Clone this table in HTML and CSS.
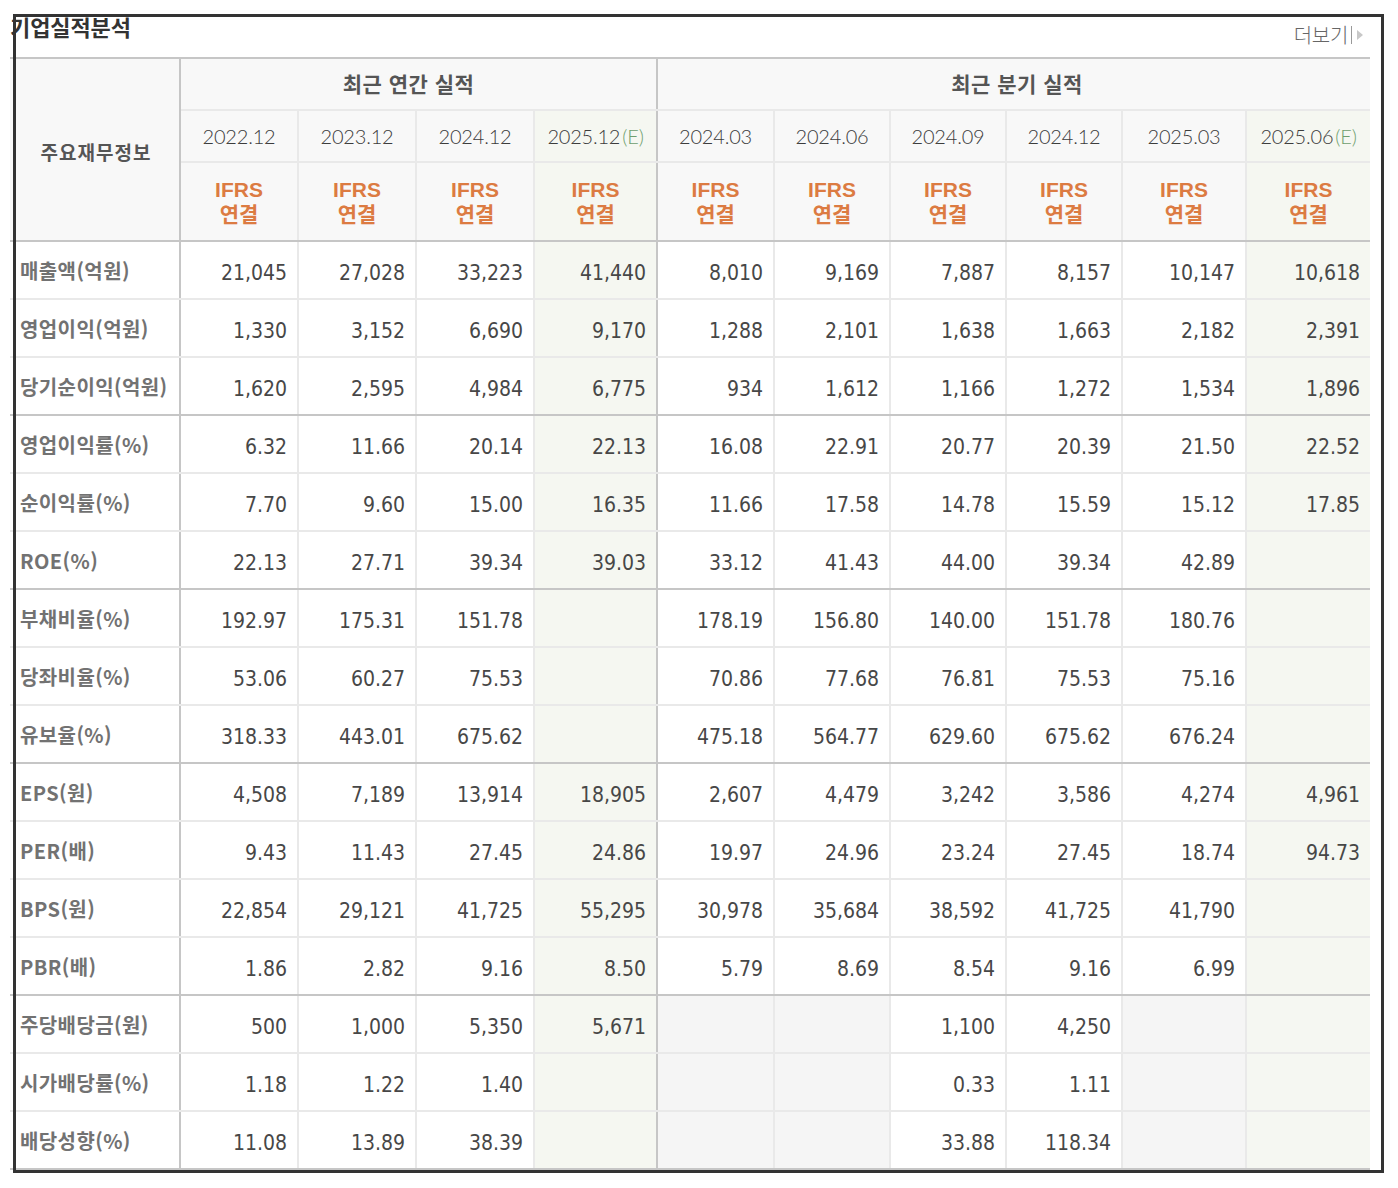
FILE: index.html
```html
<!DOCTYPE html>
<html lang="ko">
<head>
<meta charset="utf-8">
<title>기업실적분석</title>
<link rel="stylesheet" href="styles.css">
</head>
<body>
<div class="page">
  <div class="head">
    <h3 class="title">기업실적분석</h3>
    <a class="more" href="#">더보기<span class="bar"></span><span class="tri"></span></a>
  </div>
  <table class="perf">
    <colgroup>
      <col class="c-label"><col class="c-a"><col class="c-a"><col class="c-a"><col class="c-ae">
      <col class="c-q1"><col class="c-q"><col class="c-q"><col class="c-q"><col class="c-qe"><col class="c-qe">
    </colgroup>
    <thead>
      <tr class="h1">
        <th rowspan="3" class="lbl-h gl">주요재무정보</th>
        <th colspan="4" class="grp grp-a gl">최근 연간 실적</th>
        <th colspan="6" class="grp grp-q last">최근 분기 실적</th>
      </tr>
      <tr class="h2">
        <th class="dt">2022.12</th><th class="dt">2023.12</th><th class="dt">2024.12</th><th class="dt est gl">2025.12<em>(E)</em></th>
        <th class="dt">2024.03</th><th class="dt">2024.06</th><th class="dt">2024.09</th><th class="dt">2024.12</th><th class="dt">2025.03</th><th class="dt est last">2025.06<em>(E)</em></th>
      </tr>
      <tr class="h3">
        <th class="ifrs">IFRS<br>연결</th><th class="ifrs">IFRS<br>연결</th><th class="ifrs">IFRS<br>연결</th><th class="ifrs est gl">IFRS<br>연결</th>
        <th class="ifrs">IFRS<br>연결</th><th class="ifrs">IFRS<br>연결</th><th class="ifrs">IFRS<br>연결</th><th class="ifrs">IFRS<br>연결</th><th class="ifrs">IFRS<br>연결</th><th class="ifrs est last">IFRS<br>연결</th>
      </tr>
    </thead>
    <tbody>
      <tr><th class="lbl gl">매출액(억원)</th><td>21,045</td><td>27,028</td><td>33,223</td><td class="est gl">41,440</td><td>8,010</td><td>9,169</td><td>7,887</td><td>8,157</td><td>10,147</td><td class="est last">10,618</td></tr>
      <tr><th class="lbl gl">영업이익(억원)</th><td>1,330</td><td>3,152</td><td>6,690</td><td class="est gl">9,170</td><td>1,288</td><td>2,101</td><td>1,638</td><td>1,663</td><td>2,182</td><td class="est last">2,391</td></tr>
      <tr class="ge"><th class="lbl gl">당기순이익(억원)</th><td>1,620</td><td>2,595</td><td>4,984</td><td class="est gl">6,775</td><td>934</td><td>1,612</td><td>1,166</td><td>1,272</td><td>1,534</td><td class="est last">1,896</td></tr>
      <tr><th class="lbl gl">영업이익률(%)</th><td>6.32</td><td>11.66</td><td>20.14</td><td class="est gl">22.13</td><td>16.08</td><td>22.91</td><td>20.77</td><td>20.39</td><td>21.50</td><td class="est last">22.52</td></tr>
      <tr><th class="lbl gl">순이익률(%)</th><td>7.70</td><td>9.60</td><td>15.00</td><td class="est gl">16.35</td><td>11.66</td><td>17.58</td><td>14.78</td><td>15.59</td><td>15.12</td><td class="est last">17.85</td></tr>
      <tr class="ge"><th class="lbl gl">ROE(%)</th><td>22.13</td><td>27.71</td><td>39.34</td><td class="est gl">39.03</td><td>33.12</td><td>41.43</td><td>44.00</td><td>39.34</td><td>42.89</td><td class="est last"></td></tr>
      <tr><th class="lbl gl">부채비율(%)</th><td>192.97</td><td>175.31</td><td>151.78</td><td class="est gl"></td><td>178.19</td><td>156.80</td><td>140.00</td><td>151.78</td><td>180.76</td><td class="est last"></td></tr>
      <tr><th class="lbl gl">당좌비율(%)</th><td>53.06</td><td>60.27</td><td>75.53</td><td class="est gl"></td><td>70.86</td><td>77.68</td><td>76.81</td><td>75.53</td><td>75.16</td><td class="est last"></td></tr>
      <tr class="ge"><th class="lbl gl">유보율(%)</th><td>318.33</td><td>443.01</td><td>675.62</td><td class="est gl"></td><td>475.18</td><td>564.77</td><td>629.60</td><td>675.62</td><td>676.24</td><td class="est last"></td></tr>
      <tr><th class="lbl gl">EPS(원)</th><td>4,508</td><td>7,189</td><td>13,914</td><td class="est gl">18,905</td><td>2,607</td><td>4,479</td><td>3,242</td><td>3,586</td><td>4,274</td><td class="est last">4,961</td></tr>
      <tr><th class="lbl gl">PER(배)</th><td>9.43</td><td>11.43</td><td>27.45</td><td class="est gl">24.86</td><td>19.97</td><td>24.96</td><td>23.24</td><td>27.45</td><td>18.74</td><td class="est last">94.73</td></tr>
      <tr><th class="lbl gl">BPS(원)</th><td>22,854</td><td>29,121</td><td>41,725</td><td class="est gl">55,295</td><td>30,978</td><td>35,684</td><td>38,592</td><td>41,725</td><td>41,790</td><td class="est last"></td></tr>
      <tr class="ge"><th class="lbl gl">PBR(배)</th><td>1.86</td><td>2.82</td><td>9.16</td><td class="est gl">8.50</td><td>5.79</td><td>8.69</td><td>8.54</td><td>9.16</td><td>6.99</td><td class="est last"></td></tr>
      <tr><th class="lbl gl">주당배당금(원)</th><td>500</td><td>1,000</td><td>5,350</td><td class="est gl">5,671</td><td class="na"></td><td class="na"></td><td>1,100</td><td>4,250</td><td class="na"></td><td class="na-est last"></td></tr>
      <tr><th class="lbl gl">시가배당률(%)</th><td>1.18</td><td>1.22</td><td>1.40</td><td class="est gl"></td><td class="na"></td><td class="na"></td><td>0.33</td><td>1.11</td><td class="na"></td><td class="na-est last"></td></tr>
      <tr class="ge end"><th class="lbl gl">배당성향(%)</th><td>11.08</td><td>13.89</td><td>38.39</td><td class="est gl"></td><td class="na"></td><td class="na"></td><td>33.88</td><td>118.34</td><td class="na"></td><td class="na-est last"></td></tr>
    </tbody>
  </table>
</div>
<div class="frame"></div>
</body>
</html>
```

FILE: styles.css
```css
html, body {
  margin: 0;
  padding: 0;
  background: #fff;
}
body {
  font-family: "Noto Sans CJK KR", "Noto Sans", sans-serif;
  color: #444;
}
.page {
  width: 1360px;
  margin-left: 10px;
}
.head {
  display: flex;
  justify-content: space-between;
  align-items: flex-start;
  height: 57px;
}
.title {
  margin: 0;
  padding-top: 12px;
  font-size: 22px;
  line-height: 28px;
  font-weight: 700;
  color: #333;
  letter-spacing: -0.1px;
}
.more {
  display: flex;
  align-items: center;
  margin-top: 23px;
  margin-right: 7px;
  font-family: "Lato", "Noto Sans CJK KR", sans-serif;
  font-size: 20px;
  line-height: 24px;
  font-weight: 300;
  color: #666;
  text-decoration: none;
  letter-spacing: -0.3px;
}
.more .bar {
  width: 1px;
  height: 18px;
  background: #999;
  margin-left: 3px;
}
.more .tri {
  width: 0;
  height: 0;
  border-left: 6px solid #c8c8c8;
  border-top: 5px solid transparent;
  border-bottom: 5px solid transparent;
  margin-left: 5px;
}
.perf {
  width: 1360px;
  border-collapse: collapse;
  table-layout: fixed;
  border-top: 2px solid #c6c6c6;
}
.c-label { width: 170px; }
.c-a { width: 118px; }
.c-ae { width: 123px; }
.c-q1 { width: 117px; }
.c-q { width: 116px; }
.c-qe { width: 124px; }

.perf th, .perf td {
  padding: 0;
  border-right: 2px solid #e9e9e9;
  border-bottom: 2px solid #e9e9e9;
}
.perf .gl {
  border-right-color: #c6c6c6;
}
.perf .last {
  border-right: none;
}
.perf thead tr.h3 th,
.perf thead th.lbl-h {
  border-bottom-color: #c6c6c6;
}
.perf tr.ge th, .perf tr.ge td {
  border-bottom-color: #c6c6c6;
}
.perf thead th {
  background: #f8f8f8;
}
.h1 { height: 52px; }
.h2 { height: 52px; }
.h3 { height: 79px; }
.perf th.lbl-h {
  font-size: 19px;
  font-weight: 700;
  color: #555;
  letter-spacing: 1px;
  padding-top: 3px;
  padding-left: 3px;
}
.perf th.grp {
  font-size: 21px;
  font-weight: 700;
  color: #555;
  letter-spacing: 0.5px;
  padding-bottom: 2px;
}
.perf th.grp-a {
  padding-right: 20px;
}
.perf th.grp-q {
  padding-left: 6px;
}
.perf th.dt {
  font-family: "Lato", "Noto Sans CJK KR", sans-serif;
  font-size: 20px;
  font-weight: 300;
  color: #3c3c3c;
  letter-spacing: -0.2px;
}
.dt em {
  font-style: normal;
  color: #6e9e6e;
  margin-left: 2px;
}
.perf th.ifrs {
  font-family: "Liberation Sans", "Noto Sans CJK KR", sans-serif;
  font-size: 21px;
  line-height: 25px;
  font-weight: 700;
  color: #dc7b42;
  padding-top: 0;
}
.perf thead th.est,
.perf td.est {
  background: #f5f7f1;
}
.perf td.na {
  background: #f5f5f5;
}
.perf td.na-est {
  background: #f5f7f2;
}
.perf tbody tr {
  height: 58px;
}
.perf th.lbl {
  text-align: left;
  padding-left: 10px;
  font-size: 20px;
  font-weight: 700;
  color: #727272;
  letter-spacing: 0.4px;
  white-space: nowrap;
}
.perf td {
  text-align: right;
  padding-right: 10px;
  padding-top: 6px;
  font-family: "DejaVu Sans Condensed", "DejaVu Sans", sans-serif;
  font-stretch: condensed;
  font-size: 21px;
  color: #474747;
}
.frame {
  position: absolute;
  left: 13px;
  top: 14px;
  width: 1365px;
  height: 1153px;
  border: 3px solid #333;
  pointer-events: none;
}
```
